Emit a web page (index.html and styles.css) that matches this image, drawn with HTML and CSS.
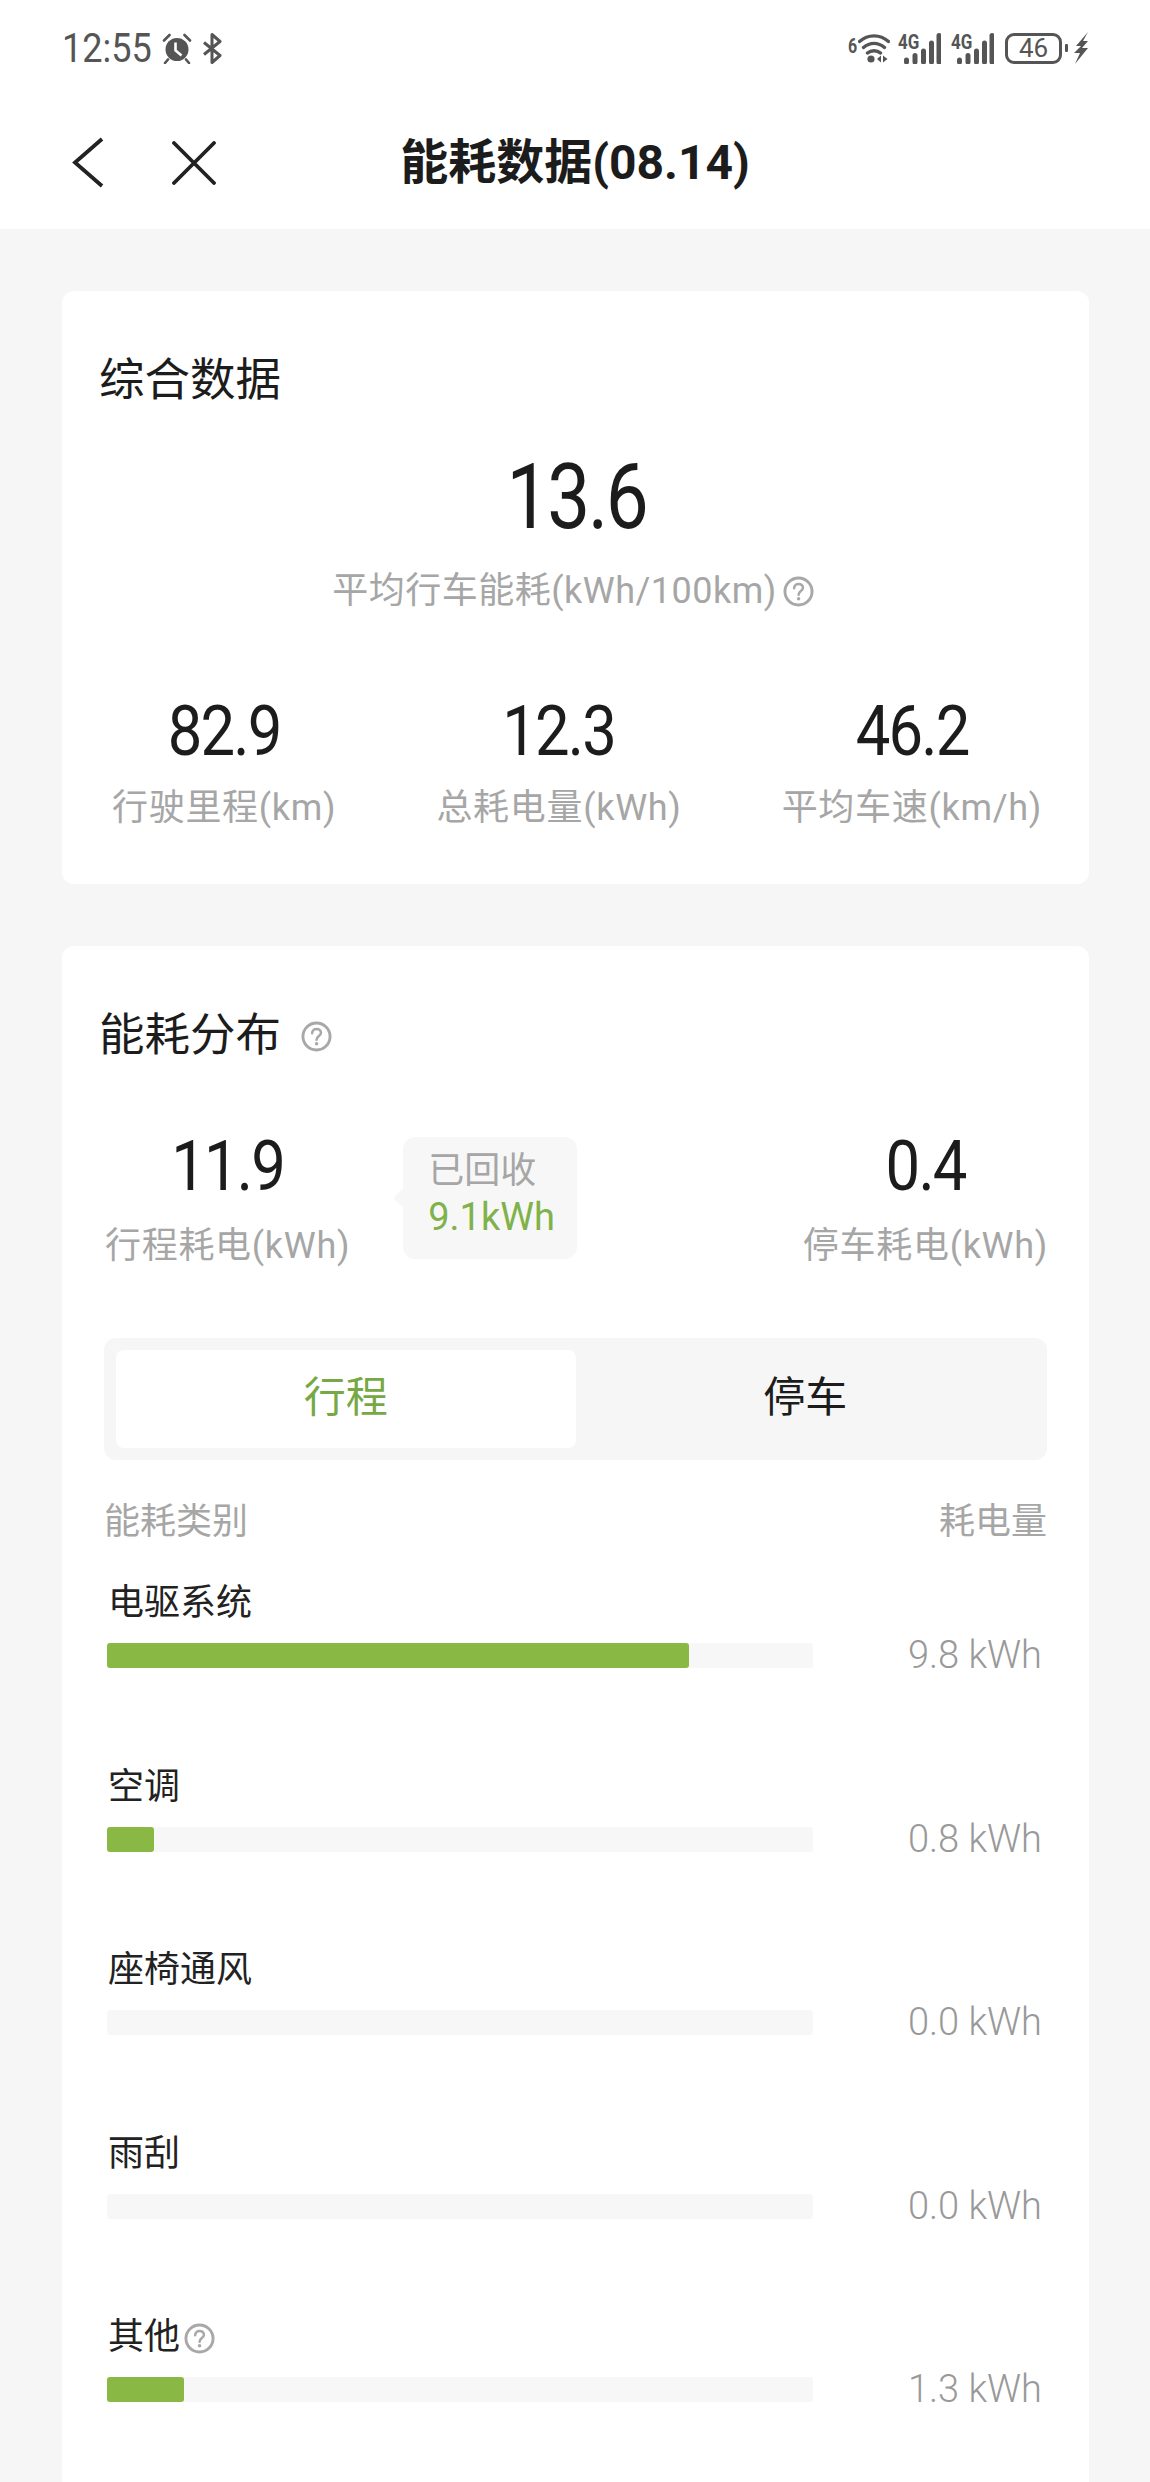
FILE: index.html
```html
<!DOCTYPE html>
<html>
  <head>
    <title>能耗数据</title>
    <meta charset="utf-8">
    <link rel="stylesheet" href="styles.css">
  </head>
  <body>
    <svg class="defs" width="0" height="0">
      <symbol id="help" viewBox="0 0 32 32">
        <circle cx="16" cy="16" r="14" fill="none" stroke="currentColor" stroke-width="3"/>
        <path d="M11.5 12.6c0-2.7 2-4.4 4.6-4.4 2.600 0 4.500 1.600 4.500 3.900 0 3.500-4.500 3.500-4.500 7.300" fill="none" stroke="currentColor" stroke-width="2.600" stroke-linecap="round"/>
        <circle cx="16.100" cy="23.400" r="1.800" fill="currentColor"/>
      </symbol>
    </svg>

    <header class="header">
      <div class="status">
        <div class="status-left">
          <span class="time">12:55</span>
          <svg class="alarm" width="30" height="31" viewBox="0 0 30 31">
            <circle cx="15" cy="16.500" r="11.500" fill="#555"/>
            <path d="M2 7.500 7.500 2M28 7.500 22.500 2M6 26.500l-3 3.500M24 26.500l3 3.500" stroke="#555" stroke-width="2.600" stroke-linecap="round"/>
            <path d="M13.500 9.500v8l6 5" fill="none" stroke="#fff" stroke-width="2.600"/>
          </svg>
          <svg class="bt" width="20" height="31" viewBox="0 0 20 31">
            <path d="M2 9.500 18 22.500 10 29.500V1.500L18 8.500 2 21.500" fill="none" stroke="#555" stroke-width="3" stroke-linejoin="round"/>
          </svg>
        </div>
        <div class="status-right">
          <span class="wifi">
            <span class="wifi-num">6</span>
            <svg width="32" height="30" viewBox="0 0 32 30">
              <path d="M1.500 8.500C10 1 22 1 30.500 8.500M5.500 14.500C12 9 20 9 26.500 14.500M9.500 20C13 17 19 17 22.500 20" fill="none" stroke="#555" stroke-width="3.400" stroke-linecap="round"/>
              <circle cx="13" cy="26" r="3.600" fill="#555"/>
              <path d="M23 22.500v7l-4-3.500zM25 22.500v7l4.500-3.500z" fill="#555"/>
            </svg>
          </span>
          <span class="signal">
            <span class="signal-type">4G</span>
            <svg width="43" height="31" viewBox="0 0 43 31">
              <path d="M8.500 27v2M17 22.500V29M25.500 18v11M33.500 10v19M41 2.500V29" stroke="#555" stroke-width="5" stroke-linecap="round"/>
            </svg>
          </span>
          <span class="signal">
            <span class="signal-type">4G</span>
            <svg width="43" height="31" viewBox="0 0 43 31">
              <path d="M8.500 27v2M17 22.500V29M25.500 18v11M33.500 10v19M41 2.500V29" stroke="#555" stroke-width="5" stroke-linecap="round"/>
            </svg>
          </span>
          <span class="battery">46</span>
          <span class="battery-nub"></span>
          <svg class="bolt" width="14" height="32" viewBox="0 0 14 32">
            <path d="M14 0 2 14h5L0 21h6L1 32 14 16H8l6-7H9z" fill="#555"/>
          </svg>
        </div>
      </div>
      <nav class="nav">
        <div class="nav-icons">
          <svg width="32" height="51" viewBox="0 0 32 51">
            <path d="M30 2 3 25.500 30 49" fill="none" stroke="#222" stroke-width="3.800"/>
          </svg>
          <svg width="44" height="44" viewBox="0 0 44 44">
            <path d="M2 2 42 42M42 2 2 42" fill="none" stroke="#222" stroke-width="3.800" stroke-linecap="round"/>
          </svg>
        </div>
        <h1 class="nav-title">能耗数据(08.14)</h1>
        <div></div>
      </nav>
    </header>

    <main class="main">
      <section class="card card-summary">
        <h2 class="card-title">综合数据</h2>
        <div class="big-value">13.6</div>
        <div class="big-label">
          平均行车能耗(kWh/100km)
          <svg class="help"><use href="#help"/></svg>
        </div>
        <div class="stats">
          <div class="stat">
            <div class="stat-value">82.9</div>
            <div class="stat-label">行驶里程(km)</div>
          </div>
          <div class="stat">
            <div class="stat-value">12.3</div>
            <div class="stat-label">总耗电量(kWh)</div>
          </div>
          <div class="stat">
            <div class="stat-value">46.2</div>
            <div class="stat-label">平均车速(km/h)</div>
          </div>
        </div>
      </section>

      <section class="card card-dist">
        <h2 class="card-title">
          能耗分布
          <svg class="help help-title"><use href="#help"/></svg>
        </h2>
        <div class="dist-stats">
          <div class="stat">
            <div class="stat-value">11.9</div>
            <div class="stat-label">行程耗电(kWh)</div>
          </div>
          <div class="recovered">
            <div class="recovered-label">已回收</div>
            <div class="recovered-value">9.1kWh</div>
          </div>
          <div class="stat stat-right">
            <div class="stat-value">0.4</div>
            <div class="stat-label">停车耗电(kWh)</div>
          </div>
        </div>

        <div class="tabs">
          <div class="tab tab-active">行程</div>
          <div class="tab">停车</div>
        </div>

        <div class="table-head">
          <span>能耗类别</span>
          <span>耗电量</span>
        </div>

        <div class="row">
          <div class="row-label">电驱系统</div>
          <div class="row-line">
            <div class="track"><div class="fill" style="width: 582px"></div></div>
            <span class="row-value">9.8 kWh</span>
          </div>
        </div>
        <div class="row">
          <div class="row-label">空调</div>
          <div class="row-line">
            <div class="track"><div class="fill" style="width: 47px"></div></div>
            <span class="row-value">0.8 kWh</span>
          </div>
        </div>
        <div class="row">
          <div class="row-label">座椅通风</div>
          <div class="row-line">
            <div class="track"></div>
            <span class="row-value">0.0 kWh</span>
          </div>
        </div>
        <div class="row">
          <div class="row-label">雨刮</div>
          <div class="row-line">
            <div class="track"></div>
            <span class="row-value">0.0 kWh</span>
          </div>
        </div>
        <div class="row">
          <div class="row-label">其他<svg class="help help-row"><use href="#help"/></svg></div>
          <div class="row-line">
            <div class="track"><div class="fill" style="width: 77px"></div></div>
            <span class="row-value">1.3 kWh</span>
          </div>
        </div>
      </section>
    </main>
  </body>
</html>
```

FILE: styles.css
```css
html,
body {
  margin: 0;
  padding: 0;
  height: 2482px;
  overflow: hidden;
}
body {
  background: #f6f6f6;
  font-family: Roboto, "Noto Sans CJK SC", sans-serif;
  color: #1c1c1c;
}
.defs {
  display: block;
}
h1,
h2 {
  margin: 0;
  font-weight: 400;
}

/* top bar */
.header {
  background: white;
  height: 229px;
}
.status {
  height: 96px;
  padding: 0 62px;
  display: flex;
  justify-content: space-between;
  align-items: center;
}
.status-left,
.status-right {
  display: flex;
  align-items: center;
}
.time {
  font-size: 41px;
  line-height: 50px;
  color: #555;
  width: 100px;
  transform: scaleX(0.88);
  transform-origin: left center;
}
.bt {
  margin-left: 10px;
}
.wifi {
  display: flex;
  align-items: flex-start;
  height: 31px;
}
.wifi-num {
  font-size: 20px;
  font-weight: 700;
  line-height: 26px;
  width: 10px;
  color: #555;
  transform: scaleX(0.8);
  transform-origin: left center;
}
.signal {
  position: relative;
  display: block;
  width: 43px;
  height: 31px;
  margin-left: 8px;
}
.signal + .signal {
  margin-left: 10px;
}
.signal svg {
  display: block;
}
.signal-type {
  position: absolute;
  left: 0;
  top: 1px;
  font-size: 20px;
  font-weight: 700;
  line-height: 16px;
  color: #555;
  transform: scaleX(0.85);
  transform-origin: left center;
}
.battery {
  box-sizing: border-box;
  width: 57px;
  height: 31px;
  margin-left: 11px;
  border: 3px solid #555;
  border-radius: 9px;
  display: flex;
  justify-content: center;
  align-items: center;
  font-size: 26px;
  color: #555;
}
.battery-nub {
  width: 3px;
  height: 8px;
  margin-left: 3px;
  background: #555;
  border-radius: 1px;
}
.bolt {
  margin-left: 6px;
}
.nav {
  height: 133px;
  padding: 0 62px;
  display: grid;
  grid-template-columns: 1fr auto 1fr;
  align-items: center;
}
.nav-icons {
  display: flex;
  align-items: center;
  gap: 68px;
  padding-left: 10px;
}
.nav-icons svg {
  display: block;
}
.nav-title {
  font-size: 48px;
  font-weight: 700;
  line-height: 60px;
  color: #1c1c1c;
}

/* cards */
.main {
  padding: 62px 61px 0 62px;
}
.card {
  background: white;
  border-radius: 12px;
  padding: 60px 42px 51px 37px;
}
.card-dist {
  padding-bottom: 200px;
}
.card + .card {
  margin-top: 62px;
}
.card-title {
  font-size: 45.5px;
  line-height: 60px;
  display: flex;
  align-items: center;
}
.big-value {
  font-size: 90px;
  line-height: 90px;
  margin: 42px 0 0 7px;
  text-align: center;
  letter-spacing: -0.03em;
  transform: scaleX(0.85);
}
.big-label {
  font-size: 36px;
  line-height: 50px;
  margin-top: 23px;
  color: #a6a6a6;
  letter-spacing: 0.5px;
  display: flex;
  justify-content: center;
  align-items: center;
}
.help {
  color: #a8a8a8;
  width: 31px;
  height: 31px;
  margin-left: 6px;
}
.help-title {
  margin-left: 20px;
}
.help-row {
  margin-left: 4px;
  vertical-align: -5px;
}
.stats {
  display: flex;
  justify-content: space-between;
  margin-top: 80px;
  padding-left: 13px;
  padding-right: 5px;
}
.stat {
  text-align: center;
}
.stat-value {
  font-size: 70px;
  line-height: 70px;
  letter-spacing: -0.03em;
  transform: scaleX(0.88);
}
.stat-label {
  font-size: 36px;
  line-height: 50px;
  margin-top: 17px;
  color: #a6a6a6;
  letter-spacing: 0.7px;
}

/* distribution */
.dist-stats {
  display: flex;
  align-items: flex-start;
  margin-top: 65px;
  padding-left: 6px;
}
.dist-stats .stat-label {
  margin-top: 20px;
}
.stat-right {
  margin: 0 -1px 0 auto;
}
.recovered {
  margin: 6px 0 0 53px;
  width: 174px;
  height: 122px;
  box-sizing: border-box;
  padding: 11px 0 0 25px;
  background: #f7f7f7;
  border-radius: 12px;
  position: relative;
}
.recovered::before {
  content: "";
  position: absolute;
  left: -7px;
  top: 54px;
  width: 14px;
  height: 14px;
  background: #f7f7f7;
  border-radius: 3px;
  transform: rotate(45deg);
}
.recovered-label {
  font-size: 36px;
  line-height: 46px;
  color: #a6a6a6;
}
.recovered-value {
  font-size: 38px;
  line-height: 46px;
  color: #7fb24a;
}
.tabs {
  margin: 67px 0 0 5px;
  height: 122px;
  box-sizing: border-box;
  padding: 12px;
  background: #f6f6f6;
  border-radius: 12px;
  display: flex;
}
.tab {
  flex: 1;
  height: 98px;
  padding-bottom: 12px;
  box-sizing: border-box;
  display: flex;
  justify-content: center;
  align-items: center;
  font-size: 42px;
  border-radius: 8px;
}
.tab-active {
  background: white;
  color: #76a844;
}
.table-head {
  display: flex;
  justify-content: space-between;
  margin: 37px 0 0 5px;
  font-size: 36px;
  line-height: 50px;
  color: #a6a6a6;
}
.row {
  margin: 93.5px 0 0 9px;
}
.table-head + .row {
  margin-top: 31px;
}
.row-label {
  font-size: 36px;
  line-height: 50px;
  color: #222;
}
.row-line {
  display: flex;
  justify-content: space-between;
  align-items: center;
  height: 25px;
  margin: 15px 0 0 -1px;
}
.track {
  width: 706px;
  height: 25px;
  background: #f7f7f7;
  border-radius: 3px;
}
.fill {
  height: 100%;
  background: #8ab845;
  border-radius: 3px;
}
.row-value {
  font-size: 38px;
  font-weight: 300;
  line-height: 25px;
  color: #999;
  margin-right: 5px;
}
```
